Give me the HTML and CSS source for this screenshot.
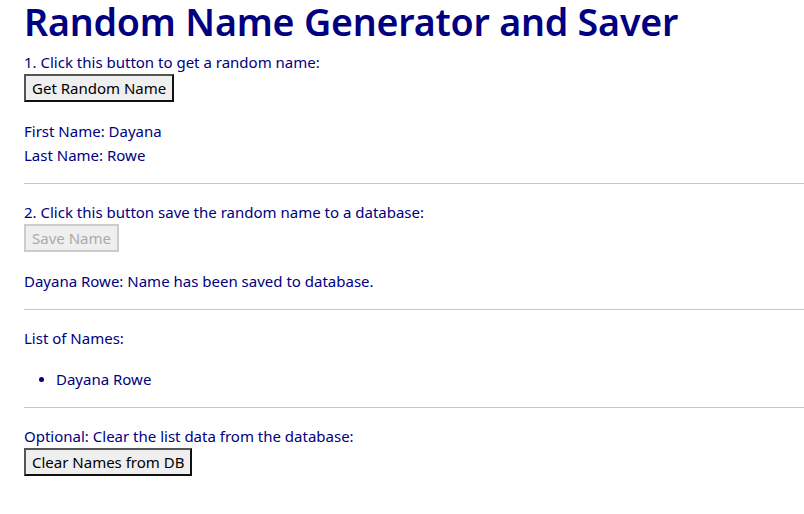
FILE: index.html
```html
<!DOCTYPE html>
<html>
<head>
<meta charset="utf-8">
<title>Random Name Generator and Saver</title>
<link rel="stylesheet" href="styles.css">
</head>
<body>
<h1 class="title">Random Name Generator and Saver</h1>
<section class="step">
  <div class="line">1. Click this button to get a random name:</div>
  <button class="btn">Get Random Name</button>
  <div class="result">
    <div class="line">First Name: Dayana</div>
    <div class="line">Last Name: Rowe</div>
  </div>
</section>
<hr class="sep">
<section class="step">
  <div class="line">2. Click this button save the random name to a database:</div>
  <button class="btn" disabled>Save Name</button>
  <div class="result">
    <div class="line">Dayana Rowe: Name has been saved to database.</div>
  </div>
</section>
<hr class="sep">
<section class="step">
  <div class="line">List of Names:</div>
  <ul class="names">
    <li class="line">Dayana Rowe</li>
  </ul>
</section>
<hr class="sep">
<section class="step">
  <div class="line">Optional: Clear the list data from the database:</div>
  <button class="btn">Clear Names from DB</button>
</section>
</body>
</html>
```
FILE: styles.css
```css
html, body {
  margin: 0;
  background: #ffffff;
}
body {
  padding-left: 24px;
  font-family: "Noto Sans", "Open Sans", sans-serif;
  font-size: 15px;
  color: #000080;
  overflow: hidden;
}
.title {
  margin: 0;
  font-size: 37.6px;
  font-weight: 600;
  line-height: 44px;
  height: 50px;
  letter-spacing: -0.2px;
}
.step {
  margin: 0;
}
.line {
  line-height: 24px;
  height: 24px;
}
.btn {
  display: block;
  margin: 0;
  height: 28px;
  padding: 0 6px;
  font-family: "Noto Sans", "Open Sans", sans-serif;
  font-size: 15px;
  color: #000000;
  background: #efefef;
  border-style: solid;
  border-width: 2px;
  border-color: #555555 #111111 #111111 #555555;
  border-radius: 0;
}
.btn:disabled {
  color: #aaaaaa;
  border-color: #cccccc;
}
.result {
  margin-top: 17px;
}
.sep {
  margin: 16px 0 16px;
  border: 0;
  height: 1px;
  background: #c4c4e0;
}
.names {
  margin: 17px 0 0;
  padding-left: 32px;
}
.names li::marker {
  font-size: 14px;
}
```
